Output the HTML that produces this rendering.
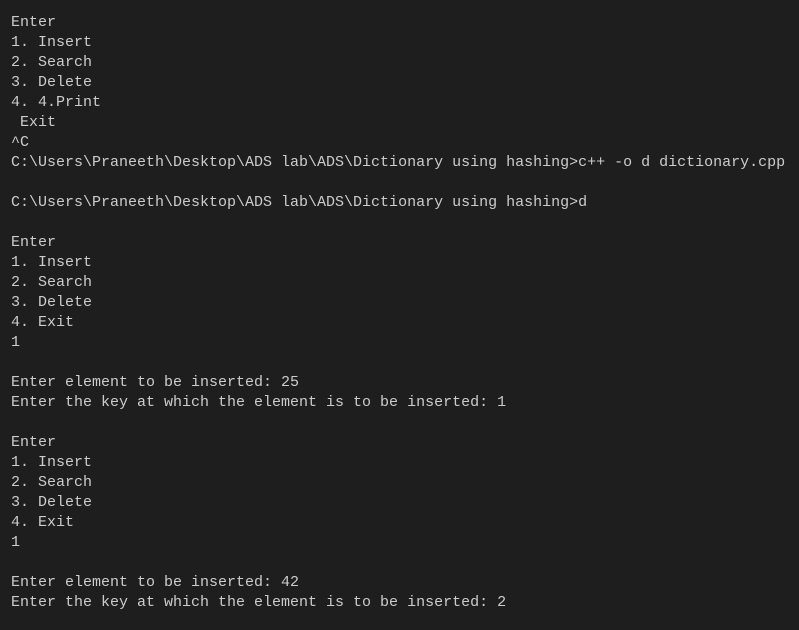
<!DOCTYPE html>
<html><head><style>
html,body{margin:0;padding:0;background:#1e1e1e;width:799px;height:630px;overflow:hidden}
pre{margin:0;position:absolute;left:11px;top:13px;font-family:"Liberation Mono",monospace;font-size:15px;line-height:20px;color:#cccccc}
</style></head><body><pre>Enter
1. Insert
2. Search
3. Delete
4. 4.Print
 Exit
^C
C:\Users\Praneeth\Desktop\ADS lab\ADS\Dictionary using hashing>c++ -o d dictionary.cpp

C:\Users\Praneeth\Desktop\ADS lab\ADS\Dictionary using hashing>d

Enter
1. Insert
2. Search
3. Delete
4. Exit
1

Enter element to be inserted: 25
Enter the key at which the element is to be inserted: 1

Enter
1. Insert
2. Search
3. Delete
4. Exit
1

Enter element to be inserted: 42
Enter the key at which the element is to be inserted: 2</pre></body></html>
